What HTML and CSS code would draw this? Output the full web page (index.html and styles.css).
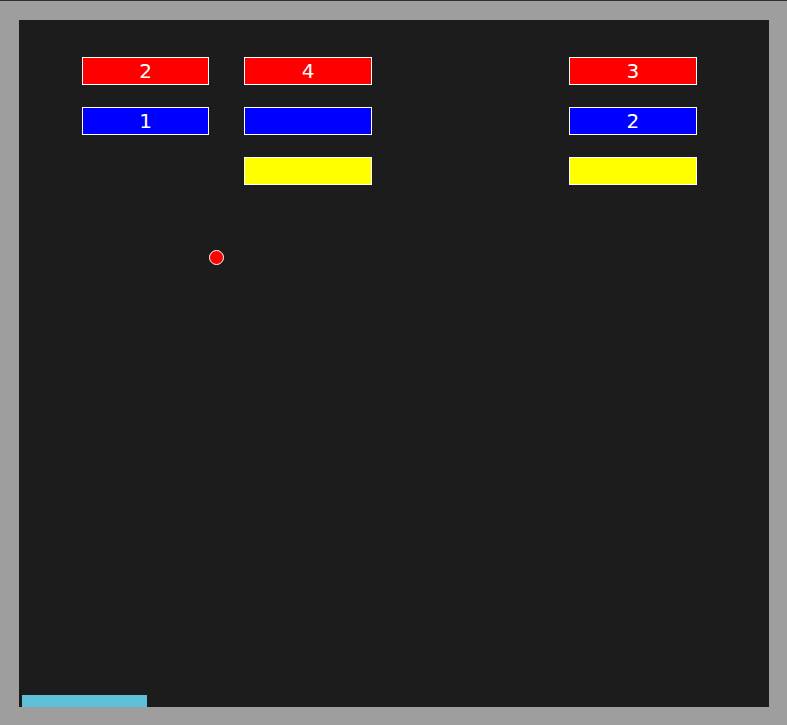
FILE: index.html
```html
<!DOCTYPE html>
<html>
<head>
<meta charset="utf-8">
<link rel="stylesheet" href="styles.css">
</head>
<body>
<div class="game">
  <div class="bricks">
    <div class="brick red">2</div>
    <div class="brick red">4</div>
    <div class="slot"></div>
    <div class="brick red">3</div>
    <div class="brick blue">1</div>
    <div class="brick blue"></div>
    <div class="slot"></div>
    <div class="brick blue">2</div>
    <div class="slot"></div>
    <div class="brick yellow"></div>
    <div class="slot"></div>
    <div class="brick yellow"></div>
  </div>
  <div class="ball"></div>
  <div class="paddle"></div>
</div>
</body>
</html>
```
FILE: styles.css
```css
html, body {
  margin: 0;
  padding: 0;
}
body {
  background: #9e9e9e;
  border-top: 1px solid #2b2f36;
  height: 724px;
  overflow: hidden;
  font-family: "DejaVu Sans", sans-serif;
}
.game {
  position: relative;
  margin: 19px 0 0 19px;
  width: 750px;
  height: 687px;
  background: #1c1c1c;
}
.bricks {
  display: grid;
  grid-template-columns: repeat(4, 127.4px);
  grid-auto-rows: 28px;
  column-gap: 35px;
  row-gap: 22px;
  padding: 37px 0 0 63px;
}
.brick {
  box-sizing: border-box;
  border: 1px solid #ffffff;
  color: #ffffff;
  font-size: 20px;
  line-height: 26px;
  text-align: center;
}
.red { background: #ff0000; }
.blue { background: #0000ff; }
.yellow { background: #ffff00; }
.ball {
  position: absolute;
  left: 190px;
  top: 230px;
  width: 13px;
  height: 13px;
  border: 1px solid #ffffff;
  border-radius: 50%;
  background: #ff0000;
}
.paddle {
  position: absolute;
  left: 3px;
  bottom: 0;
  width: 125px;
  height: 12px;
  background: #5bc0d8;
}
```
